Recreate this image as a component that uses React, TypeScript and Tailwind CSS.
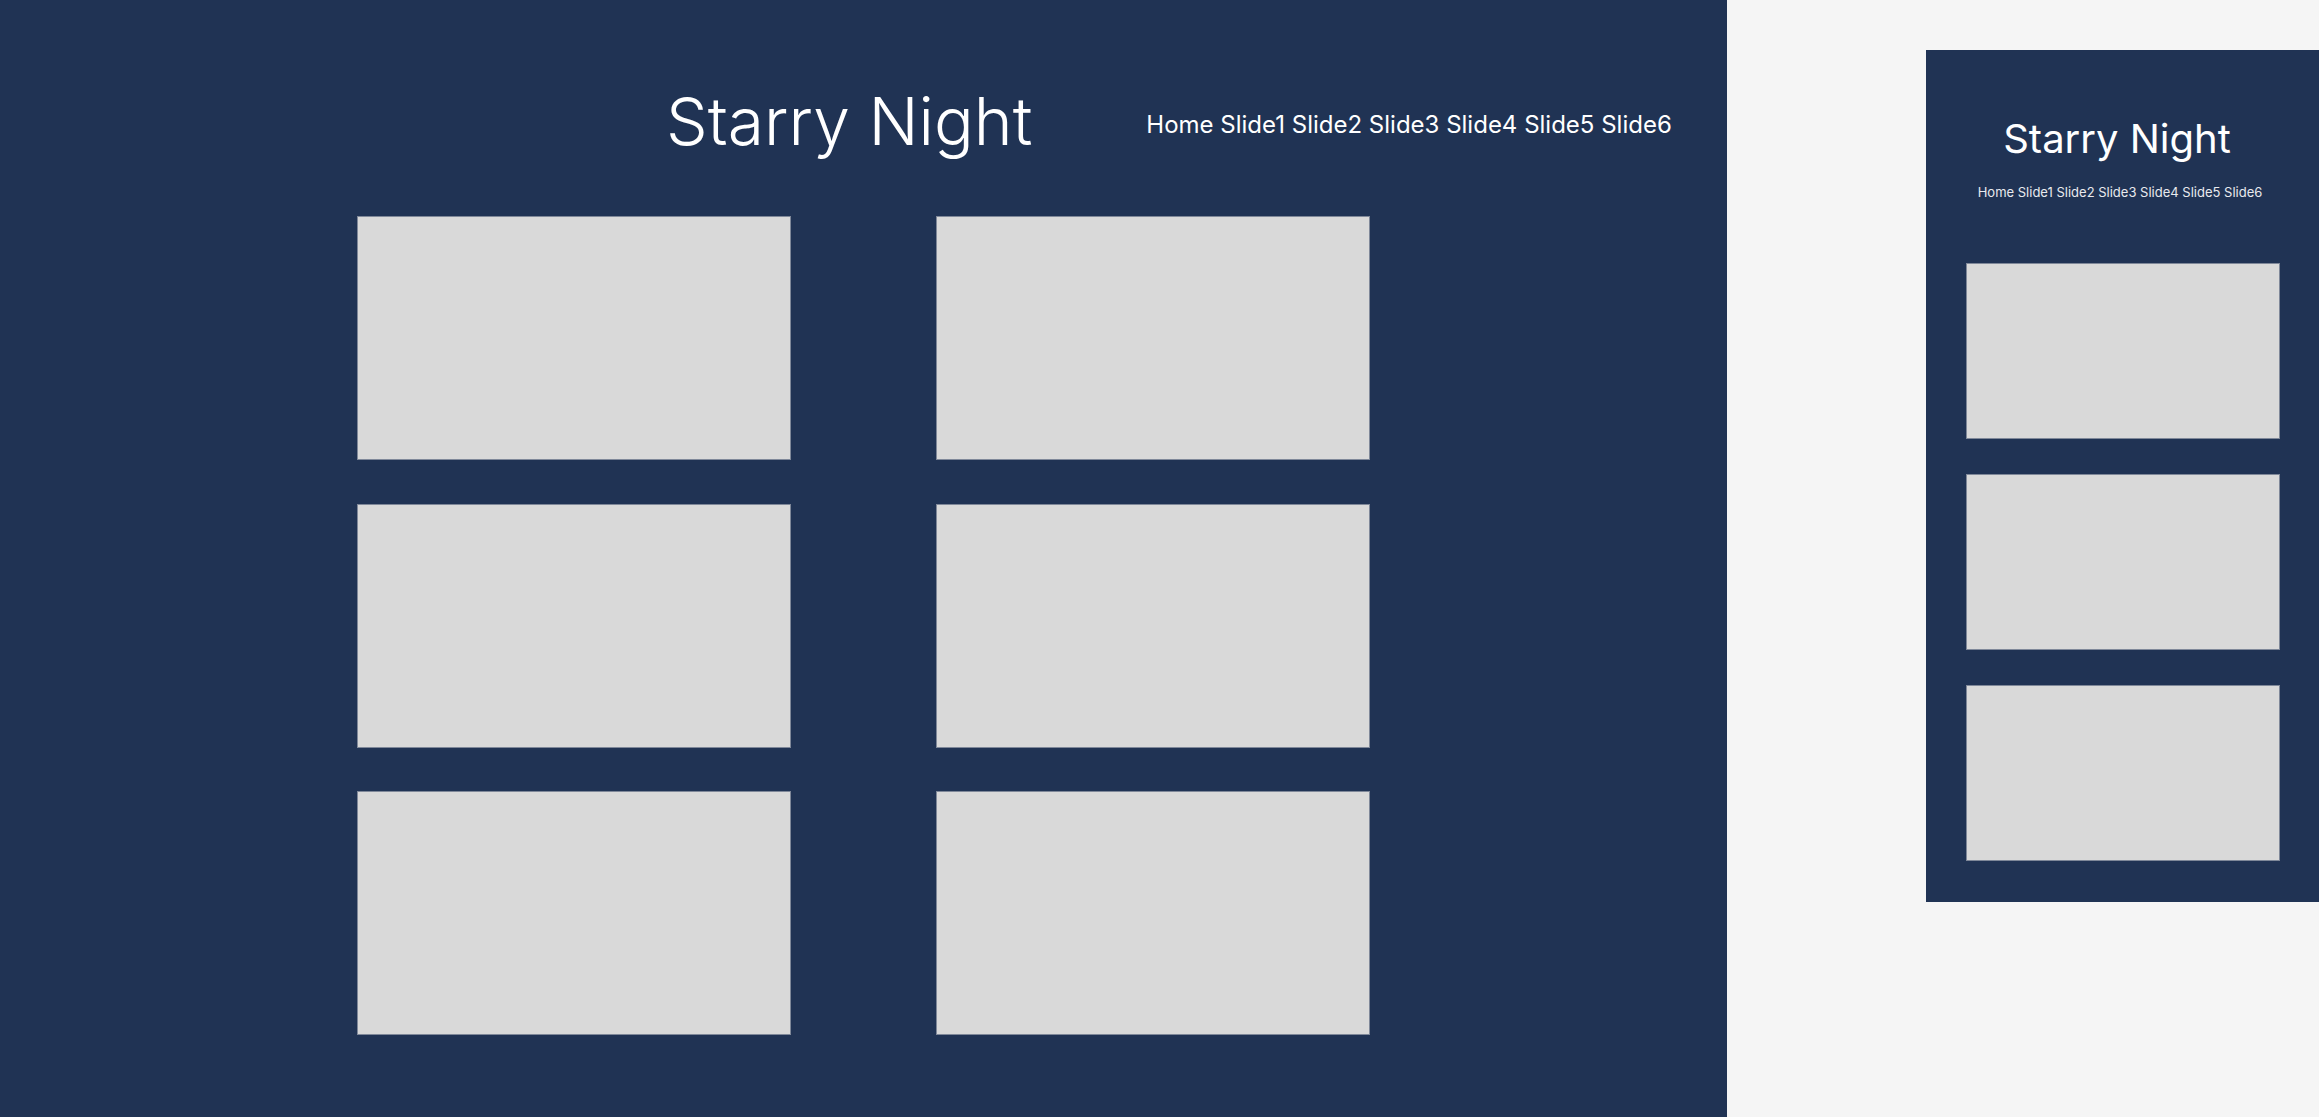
import React from "react";

const navItems = ["Home", "Slide1", "Slide2", "Slide3", "Slide4", "Slide5", "Slide6"];

function Nav({ className }: { className: string }) {
  return (
    <nav className={className}>
      {navItems.map((n, i) => (
        <React.Fragment key={n}>
          <a>{n}</a>
          {i < navItems.length - 1 ? " " : ""}
        </React.Fragment>
      ))}
    </nav>
  );
}

export default function App() {
  const font = { fontFamily: "Inter, 'Noto Sans', sans-serif" };
  return (
    <div className="flex w-full h-[1117px] overflow-hidden bg-[#f5f5f5]" style={font}>
      <div className="w-[1727px] shrink-0 h-full bg-[#203354] pt-[88px]">
        <header className="flex items-center h-[66px] pl-[666px] gap-[114px]">
          <h1 className="text-[66px] leading-none font-light text-white whitespace-nowrap">Starry Night</h1>
          <Nav className="mt-[8px] text-[24px] leading-none text-white whitespace-nowrap" />
        </header>
        <div className="grid grid-cols-[434px_434px] justify-center gap-x-[145px] gap-y-[43.5px] mt-[62px]">
          {Array.from({ length: 6 }).map((_, i) => (
            <div key={i} className="h-[244px] bg-[#d9d9d9] border border-[#7f8899]" />
          ))}
        </div>
      </div>
      <div className="shrink-0 ml-[199px] mt-[50px] w-[394px] h-[852px] bg-[#203354] pt-[69px] px-[40px] flex flex-col items-center">
        <h2 className="mr-[12px] text-[40px] leading-none font-normal text-white whitespace-nowrap">Starry Night</h2>
        <Nav className="mr-[6px] mt-[27px] text-[13px] leading-none text-[#e8eaee] whitespace-nowrap" />
        <div className="mt-[64px] w-full flex flex-col gap-[35px]">
          {Array.from({ length: 3 }).map((_, i) => (
            <div key={i} className="h-[176px] bg-[#d9d9d9] border border-[#7f8899]" />
          ))}
        </div>
      </div>
    </div>
  );
}
